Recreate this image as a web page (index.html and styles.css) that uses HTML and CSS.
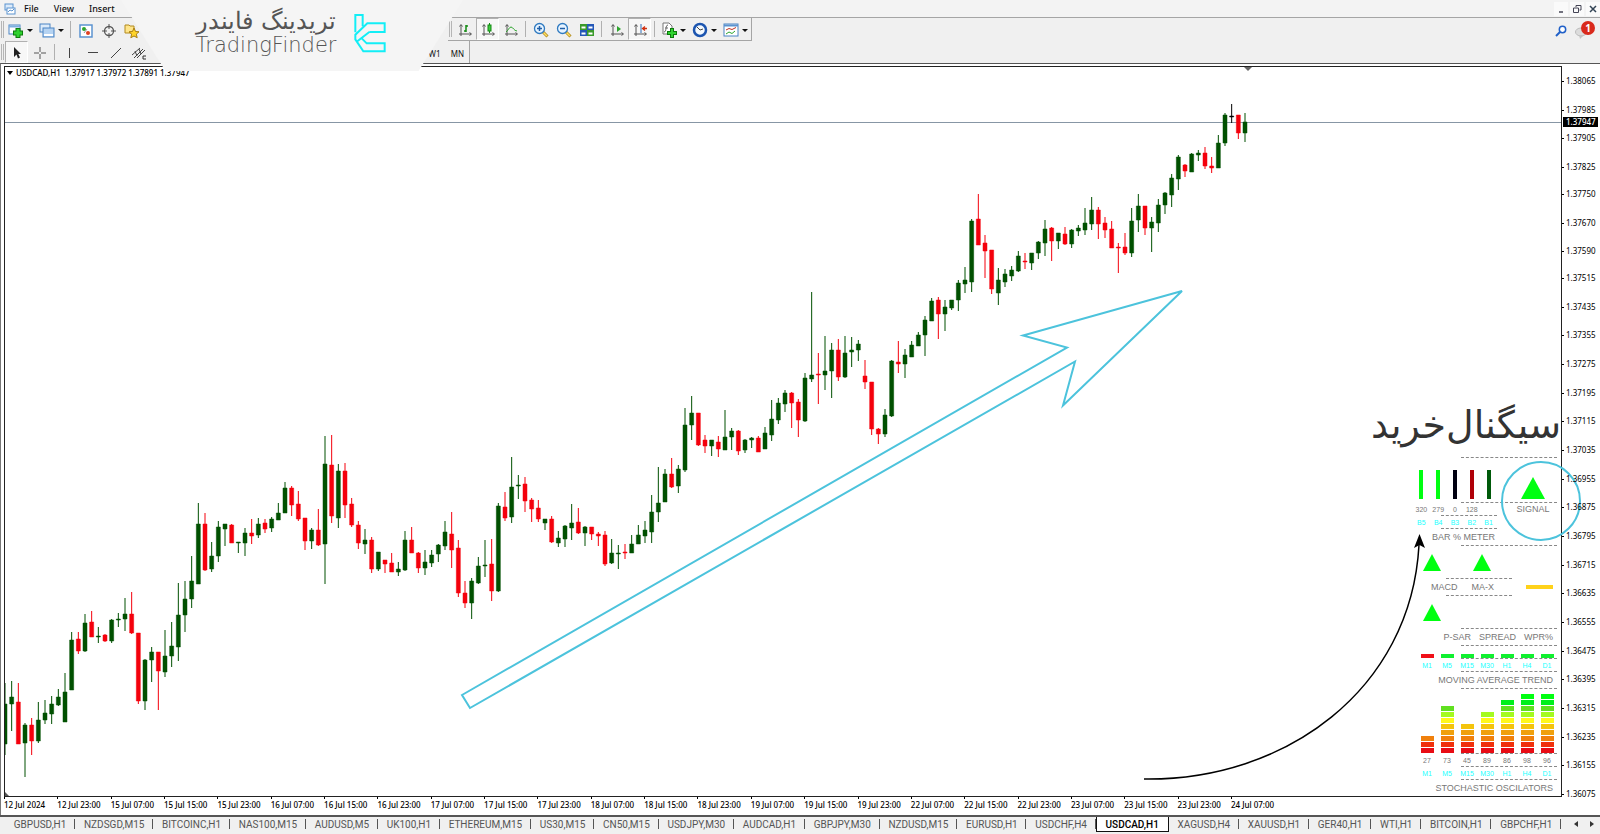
FILE: index.html
```html
<!doctype html>
<html lang="en">
<head>
    <meta charset="UTF-8">
    <meta name="viewport" content="width=device-width, initial-scale=1.0">
    <title>USDCAD,H1</title>
    <link rel="stylesheet" href="styles.css">
</head>
<body>
<div class="terminal">
    <header class="menu-bar">
        <svg class="menu-icon" width="12" height="12" viewBox="0 0 12 12">
            <rect x="1" y="1" width="8" height="6" fill="#dcebfa" stroke="#5b93cf"></rect>
            <rect x="3" y="5" width="8" height="6" fill="#fff" stroke="#5b93cf"></rect>
            <path d="M4 9l2-2 2 1 2-2" fill="none" stroke="#5b93cf"></path>
        </svg>
        <nav class="menu">
            <button type="button">File</button>
            <button type="button">View</button>
            <button type="button">Insert</button>
        </nav>
        <div class="window-controls">
            <button type="button" aria-label="Minimize"><svg width="10" height="10" viewBox="0 0 10 10"><path d="M3 8h4" stroke="#445" stroke-width="1.5"></path></svg></button>
            <button type="button" aria-label="Restore"><svg width="10" height="10" viewBox="0 0 10 10"><path d="M4 3V1.5h5V6H7.500M1.500 4h5v4.500h-5z" fill="none" stroke="#445"></path></svg></button>
            <button type="button" aria-label="Close"><svg width="10" height="10" viewBox="0 0 10 10"><path d="M2 2l6 6M8 2l-6 6" stroke="#345" stroke-width="1.500"></path></svg></button>
        </div>
    </header>

    <div class="toolbar">
        <span class="grip"></span>
        <button type="button" class="drop" aria-label="New chart">
            <svg width="16" height="16" viewBox="0 0 16 16"><rect x="1" y="2" width="11" height="9" fill="#fff" stroke="#4a84c4"></rect><path d="M1 3.500h11" stroke="#7db0e0" stroke-width="2"></path><path d="M10 5v10M5 10h10" stroke="#0b7a0b" stroke-width="5"></path><path d="M10 6v8M6 10h8" stroke="#2fd22f" stroke-width="3"></path></svg>
        </button>
        <button type="button" class="drop" aria-label="Profiles">
            <svg width="16" height="16" viewBox="0 0 16 16"><rect x="1" y="1" width="10" height="8" fill="#dcebfa" stroke="#4a84c4"></rect><rect x="4" y="5" width="11" height="9" fill="#b5d3f2" stroke="#4a84c4"></rect><path d="M5 12h9" stroke="#fff" stroke-width="2"></path></svg>
        </button>
        <span class="separator"></span>
        <button type="button" class="tool" aria-label="Market watch">
            <svg width="16" height="16" viewBox="0 0 16 16"><rect x="2" y="2" width="12" height="12" fill="#fff" stroke="#5b93cf" stroke-width="1.500"></rect><circle cx="6" cy="6" r="2" fill="#2ca52c"></circle><circle cx="10" cy="10" r="2" fill="#e04020"></circle><path d="M9 6l-3 4" stroke="#999"></path></svg>
        </button>
        <button type="button" class="tool" aria-label="Data window">
            <svg width="16" height="16" viewBox="0 0 16 16"><circle cx="8" cy="8" r="4.500" fill="none" stroke="#555" stroke-width="1.300"></circle><path d="M8 1v5M8 10v5M1 8h5M10 8h5" stroke="#555"></path></svg>
        </button>
        <button type="button" class="tool" aria-label="Navigator">
            <svg width="16" height="16" viewBox="0 0 16 16"><path d="M1 2h4l1 1h4v7H1z" fill="#ffe58a" stroke="#b28a1e"></path><path d="M10 5l1.500 3.500 3.500.3-2.700 2.300.9 3.600L10 13l-3.200 1.700.9-3.600L5 8.800l3.500-.3z" fill="#ffd42a" stroke="#a87d10"></path></svg>
        </button>

        <div class="tool-group charts-group">
            <span class="grip"></span>
            <button type="button" class="tool" aria-label="Bar chart">
                <svg width="16" height="16" viewBox="0 0 16 16"><path d="M4 3v11M2 12h12M2.500 4.500L4 2.500l1.500 2M12.500 10.500l2 1.500-2 1.500" fill="none" stroke="#555"></path><path d="M9 3v7M9 4h2M7 9h2" stroke="#128a12" stroke-width="1.500"></path></svg>
            </button>
            <button type="button" class="tool pressed" aria-label="Candlesticks">
                <svg width="16" height="16" viewBox="0 0 16 16"><path d="M4 3v11M2 12h12M2.500 4.500L4 2.500l1.500 2M12.500 10.500l2 1.500-2 1.500" fill="none" stroke="#555"></path><path d="M9.500 1v10" stroke="#128a12"></path><rect x="8" y="3" width="3" height="6" fill="#3ecb3e" stroke="#128a12"></rect></svg>
            </button>
            <button type="button" class="tool" aria-label="Line chart">
                <svg width="16" height="16" viewBox="0 0 16 16"><path d="M4 3v11M2 12h12M2.500 4.500L4 2.500l1.500 2M12.500 10.500l2 1.500-2 1.500" fill="none" stroke="#555"></path><path d="M3 10c2-1 3-5 5-5s3 4 6 4" fill="none" stroke="#2ca52c"></path></svg>
            </button>
            <span class="separator"></span>
            <button type="button" class="tool" aria-label="Zoom in">
                <svg width="16" height="16" viewBox="0 0 16 16"><path d="M10 10l4.500 4.500" stroke="#b08a20" stroke-width="3"></path><path d="M10.500 10.500l3.500 3.500" stroke="#ffdf60" stroke-width="1.500"></path><circle cx="6.500" cy="6.500" r="5" fill="#e6f3ff" stroke="#2f7ac0" stroke-width="1.300"></circle><path d="M4 6.500h5M6.500 4v5" stroke="#1f5fa8" stroke-width="1.500"></path></svg>
            </button>
            <button type="button" class="tool" aria-label="Zoom out">
                <svg width="16" height="16" viewBox="0 0 16 16"><path d="M10 10l4.500 4.500" stroke="#b08a20" stroke-width="3"></path><path d="M10.500 10.500l3.500 3.500" stroke="#ffdf60" stroke-width="1.500"></path><circle cx="6.500" cy="6.500" r="5" fill="#e6f3ff" stroke="#2f7ac0" stroke-width="1.300"></circle><path d="M4 6.500h5" stroke="#1f5fa8" stroke-width="1.500"></path></svg>
            </button>
            <button type="button" class="tool" aria-label="Tile windows">
                <svg width="16" height="16" viewBox="0 0 16 16"><path d="M1 2h7v6H1zM8 8h7v6H8z" fill="#3a9a2a"></path><path d="M8 2h7v6H8zM1 8h7v6H1z" fill="#2458b8"></path><path d="M2.500 4.500h4v2h-4zM9.500 4.500h4v2h-4zM2.500 10.500h4v2h-4zM9.500 10.500h4v2h-4z" fill="#fff"></path></svg>
            </button>
            <span class="separator"></span>
            <button type="button" class="tool" aria-label="Auto scroll">
                <svg width="16" height="16" viewBox="0 0 16 16"><path d="M4 3v11M2 12h12M2.500 4.500L4 2.500l1.500 2M12.500 10.500l2 1.500-2 1.500" fill="none" stroke="#555"></path><path d="M8 4l4 3-4 3z" fill="#2ca52c"></path></svg>
            </button>
            <button type="button" class="tool pressed" aria-label="Chart shift">
                <svg width="16" height="16" viewBox="0 0 16 16"><path d="M4 3v11M2 12h12M2.500 4.500L4 2.500l1.500 2M12.500 10.500l2 1.500-2 1.500" fill="none" stroke="#555"></path><path d="M9 2v9" stroke="#2f6fb8"></path><path d="M15 6.500h-4M13 4.500l-2.500 2 2.500 2" fill="none" stroke="#d03010" stroke-width="1.300"></path></svg>
            </button>
            <span class="separator"></span>
            <button type="button" class="drop" aria-label="Indicators">
                <svg width="16" height="16" viewBox="0 0 16 16"><path d="M2 1h6l3 3v8H2z" fill="#fff" stroke="#777"></path><path d="M7 3c-3 0-1 7-4 7M4 6h3" fill="none" stroke="#666"></path><path d="M11 6v10M6 11h10" stroke="#0b7a0b" stroke-width="4"></path><path d="M11 7v8M7 11h8" stroke="#2fd22f" stroke-width="2"></path></svg>
            </button>
            <button type="button" class="drop" aria-label="Periods">
                <svg width="16" height="16" viewBox="0 0 16 16"><circle cx="8" cy="8" r="6" fill="#f4faff" stroke="#1c55b0" stroke-width="2.500"></circle><path d="M5 5l3 3 3-1" fill="none" stroke="#444"></path></svg>
            </button>
            <button type="button" class="drop" aria-label="Templates">
                <svg width="16" height="16" viewBox="0 0 16 16"><rect x="1" y="2" width="14" height="12" fill="#fff" stroke="#4a84c4"></rect><path d="M1 3.500h14" stroke="#5b93cf" stroke-width="2"></path><path d="M3 8l3-1.500 3 1 4-2" fill="none" stroke="#c03020"></path><path d="M3 12l3-2 3 1.500 3-2.500" fill="none" stroke="#2ca52c"></path></svg>
            </button>
        </div>

        <div class="toolbar-end">
            <button type="button" class="tool" aria-label="Search">
                <svg width="12" height="12" viewBox="0 0 12 12"><circle cx="7.500" cy="4.500" r="3.200" fill="#fff" stroke="#2060c8" stroke-width="1.500"></circle><path d="M5 7l-4 4" stroke="#2060c8" stroke-width="2"></path></svg>
            </button>
            <button type="button" class="tool messages" aria-label="Messages">
                <svg width="16" height="16" viewBox="0 0 16 16"><ellipse cx="6" cy="9" rx="5.500" ry="4" fill="#dcdcdc" stroke="#bbb"></ellipse><path d="M4 12l1 4 4-4z" fill="#c4c4c4"></path></svg>
                <span class="badge">1</span>
            </button>
        </div>
    </div>

    <div class="toolbar">
        <span class="grip"></span>
        <button type="button" class="tool pressed" aria-label="Cursor">
            <svg width="16" height="16" viewBox="0 0 16 16"><path d="M5 2v10l2.500-2.500L9 13.500l2-1L9.300 9H12z" fill="#222"></path></svg>
        </button>
        <button type="button" class="tool" aria-label="Crosshair">
            <svg width="16" height="16" viewBox="0 0 16 16"><path d="M8 2v5M8 9v5M2 8h5M9 8h5" stroke="#555"></path></svg>
        </button>
        <span class="separator"></span>
        <button type="button" class="tool" aria-label="Vertical line">
            <svg width="16" height="16" viewBox="0 0 16 16"><path d="M7.500 3v10" stroke="#444"></path></svg>
        </button>
        <button type="button" class="tool" aria-label="Horizontal line">
            <svg width="16" height="16" viewBox="0 0 16 16"><path d="M3 7.500h10" stroke="#444"></path></svg>
        </button>
        <button type="button" class="tool" aria-label="Trendline">
            <svg width="16" height="16" viewBox="0 0 16 16"><path d="M3 13L13 3" stroke="#444"></path></svg>
        </button>
        <button type="button" class="tool" aria-label="Channel">
            <svg width="16" height="16" viewBox="0 0 16 16"><path d="M1 10l8-7M3 13l9-9M6 13l8-8M4 6l2 5M8 4l2 5" stroke="#444"></path><path d="M15 11h-3v3h3" fill="none" stroke="#333"></path></svg>
        </button>
        <div class="tool-group frames-group">
            <button type="button" class="tool">W1</button>
            <button type="button" class="tool">MN</button>
        </div>
    </div>

    <div class="brand">
        <div class="brand-name">
            <span class="brand-persian" lang="fa" dir="rtl">تریدینگ فایندر</span>
            <span>TradingFinder</span>
        </div>
        <svg width="36" height="42" viewBox="1066 36 108 124">
            <path d="M1076 96V44h22v34M1118 95h46V69h-52l-36 34v14l24 36h64v-24h-54l-14-14M1118 95l-36 28" fill="none" stroke="#12eef6" stroke-width="6"></path>
        </svg>
    </div>

    <main class="chart-window">
        <section class="pane">
            <svg class="chart" viewBox="5 67 1556 729" preserveAspectRatio="none">
                <path d="M5 122.500H1561" stroke="#8796a5"></path>
                <path d="M1244 67h8l-4 4z" fill="#666"></path>
                <path d="M5 792l4 4H5z" fill="#555"></path>
                <g id="candles"></g>
                <path class="trend-arrow" d="M462 695L1067 347.500 1023 335.500 1182 291 1063 405.500 1075 361.500 470 708z"></path>
                <path class="pointer" d="M1144 779C1285 781 1411 690 1419 545"></path>
                <path d="M1419.500 534l5.500 14-5.500-3-5.500 3z"></path>
            </svg>
            <h1 class="pane-title">USDCAD,H1&nbsp; 1.37917 1.37972 1.37891 1.37947</h1>

            <aside class="panel">
                <h2 lang="fa" dir="rtl">سیگنال‌خرید</h2>
                <hr>
                <div class="row meter-bars">
                    <ul class="meter">
                        <li class="bar lime"></li>
                        <li class="bar lime"></li>
                        <li class="bar black"></li>
                        <li class="bar dark-red"></li>
                        <li class="bar dark-green"></li>
                    </ul>
                    <div class="signal"><i class="up up-large"></i></div>
                </div>
                <hr>
                <div class="row small">
                    <ul class="meter values"><li>320</li><li>279</li><li>0</li><li>128</li><li></li></ul>
                    <div class="signal"><span>SIGNAL</span></div>
                </div>
                <hr class="mid">
                <div class="row small">
                    <ul class="meter names"><li>B5</li><li>B4</li><li>B3</li><li>B2</li><li>B1</li></ul>
                </div>
                <hr class="mid">
                <div class="row caption meter-caption">BAR % METER</div>
                <hr>
                <div class="row arrows"><i class="up"></i><i class="up"></i></div>
                <hr class="low">
                <div class="row pair"><span>MACD</span><span>MA-X</span><i class="neutral"></i></div>
                <hr class="low">
                <div class="row arrows"><i class="up"></i></div>
                <hr>
                <div class="row caption"><span>P-SAR</span><span>SPREAD</span><span>WPR%</span></div>
                <hr>
                <ul class="row small frames trend" id="trend"></ul>
                <hr>
                <ul class="row small frames names"><li>M1</li><li>M5</li><li>M15</li><li>M30</li><li>H1</li><li>H4</li><li>D1</li></ul>
                <hr>
                <div class="row caption">MOVING AVERAGE TREND</div>
                <hr>
                <ul class="row frames stacks" id="stacks"></ul>
                <hr>
                <ul class="row small frames values"><li>27</li><li>73</li><li>45</li><li>89</li><li>86</li><li>98</li><li>96</li></ul>
                <hr>
                <ul class="row small frames names"><li>M1</li><li>M5</li><li>M15</li><li>M30</li><li>H1</li><li>H4</li><li>D1</li></ul>
                <hr>
                <div class="row caption">STOCHASTIC OSCILATORS</div>
            </aside>
        </section>

        <div class="price-axis">
            <ol id="prices"></ol>
            <output class="price-now">1.37947</output>
        </div>
        <ol class="time-axis" id="times"></ol>
    </main>

    <footer class="tab-bar">
        <nav class="tabs" id="tabs"></nav>
        <div class="tab-scroll">
            <button type="button" aria-label="Previous tabs"><svg width="4" height="6" viewBox="0 0 4 6"><path d="M4 0v6L0 3z" fill="#333"></path></svg></button>
            <button type="button" aria-label="Next tabs"><svg width="4" height="6" viewBox="0 0 4 6"><path d="M0 0v6l4-3z" fill="#333"></path></svg></button>
        </div>
    </footer>
</div>
<script src="script.js"></script>
</body>
</html>
```
FILE: styles.css
```css
*, *:before, *:after {
    box-sizing: border-box;
}

body {
    margin: 0;
    font-family: "Noto Sans", "Open Sans", sans-serif;
    font-size: 9px;
    color: #111;
    background: #f0f0f0;
}

button {
    padding: 0;
    border: 0;
    background: none;
    font: inherit;
    color: inherit;
}

ul, ol {
    margin: 0;
    padding: 0;
    list-style: none;
}

.terminal {
    position: relative;
    display: flex;
    flex-direction: column;
    min-height: 100vh;
}

/* menu */
.menu-bar {
    display: flex;
    align-items: center;
    height: 18px;
    padding-left: 4px;
    border-bottom: 1px solid #a5a5a5;
    background: #f3f3f3;
}

.menu {
    display: flex;
    gap: 15px;
    margin-left: 8px;
    font-weight: 500;
}

.window-controls {
    display: flex;
    gap: 2px;
    margin-left: auto;
}

.window-controls button {
    display: flex;
    align-items: center;
    justify-content: center;
    width: 14px;
    height: 14px;
    background: #fafafa;
}

/* toolbars */
.toolbar {
    display: flex;
    align-items: stretch;
    height: 23px;
}

.toolbar + .toolbar {
    height: 22px;
}

.tool-group {
    display: flex;
    border-right: 1px solid #a5a5a5;
}

.charts-group {
    margin-left: 305px;
    border-bottom: 1px solid #a5a5a5;
}

.frames-group {
    margin-left: 273px;
    font-size: 8px;
}

.grip {
    width: 3px;
    margin: 3px 1px;
    border-left: 1px solid #b5b5b5;
    border-right: 1px solid #b5b5b5;
}

.separator {
    width: 1px;
    margin: 3px;
    background: #b0b0b0;
}

.tool, .drop {
    display: flex;
    align-items: center;
    justify-content: center;
    width: 23px;
    padding-top: 2px;
}

.drop {
    justify-content: flex-start;
    gap: 3px;
    width: 31px;
    padding-left: 3px;
}

.drop:after {
    content: '';
    border: 3px solid transparent;
    border-top-color: #111;
    border-bottom: 0;
}

.pressed {
    border: 1px solid #b0b0b0;
    border-right-color: #fff;
    border-bottom-color: #fff;
    background: #f7f7f7;
}

.toolbar-end {
    display: flex;
    margin-left: auto;
}

.messages {
    position: relative;
    width: 28px;
    padding-right: 6px;
}

.badge {
    position: absolute;
    top: 3px;
    right: 5px;
    width: 14px;
    border-radius: 50%;
    background: #d92a1c;
    color: #fff;
    font-size: 10px;
    font-weight: bold;
    line-height: 14px;
}

/* brand plate that lies over the toolbars */
.brand {
    position: absolute;
    z-index: 3;
    top: 0;
    left: 121px;
    display: flex;
    align-items: center;
    justify-content: center;
    gap: 16px;
    width: 342px;
    height: 71px;
    padding-bottom: 6px;
    background: #f5f5f5;
    clip-path: polygon(0 0, 100% 0, 87% 100%, 13% 100%);
}

.brand-name {
    display: flex;
    flex-direction: column;
    align-items: center;
    font-family: "DejaVu Sans", sans-serif;
    font-weight: 200;
    font-size: 21px;
    line-height: 24px;
    color: #555;
}

.brand-persian {
    font-size: 24px;
}

/* chart window */
.chart-window {
    display: grid;
    flex: 1;
    grid-template-columns: 1fr 38px;
    grid-template-rows: 1fr 18px;
    padding: 2px 0 0 3px;
    border-top: 1px solid #555;
    border-left: 1px solid #777;
    background: #fff;
    font-size: 8px;
    color: #000;
}

.pane {
    position: relative;
    min-height: 560px;
    border: 1px solid #222;
}

.chart {
    position: absolute;
    width: 100%;
    height: 100%;
}

.trend-arrow {
    fill: none;
    stroke: #4cc3dc;
    stroke-width: 2;
}

.pointer {
    fill: none;
    stroke: #000;
    stroke-width: 1.5;
}

.up-candle {
    fill: #005000;
    stroke: #005000;
}

.down-candle {
    fill: #f4000c;
    stroke: #f4000c;
}

.flat-candle {
    fill: #000;
    stroke: #000;
}

.pane-title {
    position: absolute;
    top: 0;
    left: 2px;
    display: flex;
    align-items: center;
    gap: 3px;
    margin: 0;
    font-size: 8px;
    font-weight: 500;
    line-height: 12px;
}

.pane-title:before {
    content: '';
    border: 3px solid transparent;
    border-top: 4px solid #000;
    border-bottom: 0;
}

.price-axis {
    position: relative;
    display: flex;
    padding: 15px 0 3px;
}

.price-axis ol {
    display: flex;
    flex-direction: column;
    flex: 1;
}

.price-axis li {
    display: flex;
    align-items: flex-start;
    min-height: 0;
}

.price-axis li span {
    margin-top: -6px;
    margin-left: 2px;
    line-height: 12px;
}

.price-axis li:before {
    content: '';
    width: 2px;
    height: 1px;
    background: #000;
}

.price-now {
    position: absolute;
    top: 7%;
    left: 1px;
    width: 35px;
    padding-left: 3px;
    background: #000;
    color: #fff;
    font-weight: 500;
    line-height: 10px;
}

.time-axis {
    display: flex;
    overflow: hidden;
    font-weight: 500;
}

.time-axis li {
    flex: 0 0 calc(100% / 29.2);
    white-space: nowrap;
    line-height: 12px;
}

.time-axis li:before {
    content: '';
    display: block;
    width: 1px;
    height: 2px;
    background: #000;
}

/* signal panel */
.panel {
    position: absolute;
    right: 4px;
    bottom: 0;
    display: flex;
    flex-direction: column;
    width: 144px;
    font-family: "Liberation Sans", sans-serif;
    font-size: 9px;
    color: #777;
}

.panel h2 {
    align-self: flex-end;
    margin: 0 -4px 8px 0;
    font-family: "DejaVu Sans", sans-serif;
    font-size: 38px;
    font-weight: normal;
    line-height: 48px;
    white-space: nowrap;
    color: #333;
}

.panel hr {
    width: 96px;
    margin: 0 0 0 auto;
    border: 0;
    border-top: 1px dashed #888;
}

.panel hr.mid {
    width: 56px;
    margin-right: 60px;
}

.panel hr.low {
    width: 66px;
    margin-right: 45px;
}

.row {
    display: flex;
    align-items: center;
    height: 16px;
}

.small {
    height: 12px;
}

.meter-bars {
    height: 44px;
    align-items: flex-end;
    padding-bottom: 3px;
}

.arrows {
    gap: 32px;
    height: 32px;
    padding-left: 10px;
}

.stacks {
    height: 64px;
}

.meter {
    display: grid;
    grid-template-columns: repeat(5, 1fr);
    justify-items: center;
    width: 84px;
}

.bar {
    width: 4px;
    height: 29px;
}

.lime { background: #0f1; }
.black { background: #001; }
.dark-red { background: #b00008; }
.dark-green { background: #005a0a; }

.signal {
    position: relative;
    display: flex;
    flex: 1;
    justify-content: center;
    padding-left: 12px;
}

/* ring round the signal cell */
.meter-bars .signal:after {
    content: '';
    position: absolute;
    top: -16px;
    left: 4px;
    width: 80px;
    height: 80px;
    border: 2px solid #4cc3dc;
    border-radius: 50%;
}

.up {
    border: 9px solid transparent;
    border-top: 0;
    border-bottom: 17px solid #0f1;
}

.up-large {
    border-width: 0 12px 22px;
}

.neutral {
    width: 27px;
    height: 4px;
    margin: 0 4px 0 auto;
    background: #ffd21a;
}

.values, .names {
    font-size: 7px;
}

.names {
    color: #2ff;
}

.caption {
    justify-content: flex-end;
    gap: 8px;
    padding-right: 4px;
    white-space: nowrap;
}

.meter-caption {
    padding-right: 62px;
}

.pair {
    gap: 14px;
    padding-left: 18px;
}

.frames {
    display: grid;
    grid-template-columns: repeat(7, 20px);
    justify-content: end;
    justify-items: center;
}

.frames.trend, .frames.stacks {
    align-items: end;
}

.trend li {
    width: 13px;
    height: 4px;
}

.stacks li {
    display: flex;
    flex-direction: column-reverse;
    gap: 1px;
}

.stacks i {
    width: 13px;
    height: 5px;
}

/* tabs */
.tab-bar {
    display: flex;
    height: 19px;
    border-top: 2px solid #555;
    padding-left: 5px;
    color: #555;
}

.tabs {
    display: flex;
    flex: 1;
    height: 15px;
    font-family: Roboto, sans-serif;
    font-size: 10px;
}

.tabs button {
    position: relative;
    flex: 1 1 auto;
    white-space: nowrap;
}

.tabs button:after {
    content: '';
    position: absolute;
    top: 2px;
    right: 0;
    width: 1px;
    height: 10px;
    background: #555;
}

.tabs button.active {
    border: 1px solid #111;
    border-top: 0;
    background: #fff;
    color: #000;
    font-weight: 500;
}

.tabs button.active:after {
    display: none;
}

.tab-scroll {
    display: flex;
    align-items: center;
    gap: 12px;
    width: 39px;
    height: 13px;
    padding-left: 13px;
}

.tab-scroll button {
    display: flex;
}
```
FILE: script.js
```js
// direction, high, body top, body bottom, low
const candles = `
u683,704,744,755 u681,697,704,731 d683,702,744,744 u723,725,743,777 d718,725,741,755 u702,720,741,743
u700,713,720,724 u696,704,714,724 u689,697,705,706 u673,692,722,722 u632,640,690,690 d632,639,651,654
u614,623,651,652 d611,622,637,637 u627,636,637,643 d634,635,641,642 u619,620,641,643 u613,619,620,627
u598,614,619,631 d592,614,633,634 d633,633,701,704 u659,660,701,710 u647,652,660,682 d652,652,671,710
u630,656,672,677 u622,646,656,667 u583,615,647,661 u581,599,615,632 u556,581,599,608 u503,524,584,584
d513,524,570,571 u542,556,569,572 u521,527,556,562 u524,524,529,546 d524,525,543,543 u542,542,543,553
u528,533,543,556 d519,533,536,544 u518,524,535,538 d519,523,529,533 u517,519,528,532 u503,513,520,520
u482,488,513,513 d486,488,505,516 d491,504,519,521 d518,518,541,550 u528,530,541,549 d509,530,545,546
u436,464,544,584 d435,465,516,523 u464,471,518,528 d463,471,505,518 d498,504,525,527 d521,525,543,549
u529,540,544,554 d537,540,569,573 u552,552,569,571 d560,560,564,573 d553,563,572,572 u562,569,572,576
u531,540,570,571 d527,540,553,553 d552,553,568,573 u550,562,568,575 u550,555,563,567 u544,545,554,562
u521,532,546,550 d512,534,550,568 d540,548,593,597 d581,593,603,608 u578,581,603,619 u557,566,583,584
u540,565,566,577 d539,564,591,601 u503,506,591,592 d492,507,518,521 u457,487,517,523 u475,485,486,499
d477,484,501,512 d498,500,509,522 d500,508,519,522 u519,519,523,530 d516,519,542,543 u531,538,543,547
u525,526,539,547 u504,523,528,540 d508,522,533,534 u526,527,533,546 d527,527,534,540 d532,534,536,546
d531,535,564,566 u539,553,563,564 u545,553,554,569 d544,552,553,559 u535,544,553,553 u525,535,544,544
u521,530,536,543 u495,512,532,543 u467,503,512,522 u469,474,502,502 d458,474,487,488 u465,469,486,493
u408,425,470,472 u396,413,425,440 d413,413,445,446 d435,440,446,453 u440,440,446,456 d436,442,449,457
u410,437,450,450 u428,431,437,450 d430,431,451,455 u439,440,450,453 u437,438,440,448 d436,438,452,452
u427,433,449,449 u400,419,435,441 u398,403,420,424 u390,393,404,412 d392,393,403,428 d399,402,420,437
u373,378,421,422 u292,375,379,382 d353,374,375,404 u336,371,375,390 u343,350,371,398 d339,350,377,381
u336,353,377,378 u337,350,352,367 u340,344,350,361 d360,376,382,389 d382,382,429,435 d428,429,434,444
u409,415,434,437 u360,361,416,417 d341,362,364,373 u349,355,364,378 u341,345,357,357 u332,335,346,346
u316,320,335,356 u298,301,321,321 d297,300,314,339 u300,307,314,331 u300,300,308,310 u280,283,300,311
u267,280,284,293 u219,221,282,292 d194,219,245,245 d235,243,251,278 d250,250,289,294 u268,280,293,305
u269,274,282,287 u266,270,276,281 u251,256,271,272 d253,261,262,269 u253,253,263,270 u241,242,253,259
u220,229,243,256 d227,228,241,261 u233,233,241,249 d227,234,244,245 u229,230,244,248 u225,228,231,236
u208,223,230,235 u197,210,224,230 d207,210,224,239 d217,223,230,238 d221,229,248,248 d243,247,248,273
d233,247,253,255 u208,221,253,257 u194,206,220,232 d206,206,228,235 u217,222,228,252 u199,205,223,232
u192,193,205,214 u174,178,195,207 u155,157,179,190 d164,165,171,177 u153,154,172,172 u150,153,155,161
d147,153,166,169 d157,166,168,173 u135,143,168,168 u113,115,143,146 f104,116,117,123 d115,115,133,139
u113,122,133,142`.trim().split(/\s+/);

const kinds = { u: 'up-candle', d: 'down-candle', f: 'flat-candle' };
const step = 20 / 3;

document.getElementById('candles').innerHTML = candles.map((item, i) => {
    const [high, top, bottom, low] = item.slice(1).split(',').map(Number);
    const x = 5 + i * step;
    return `<g class="${kinds[item[0]]}">
        <path d="M${x} ${high}V${low}"></path>
        <path d="M${x - 2} ${top}h4V${Math.max(bottom, top + 1)}h-4z" stroke-width=".5"></path>
    </g>`;
}).join('');

// price scale, each gap grows with the price distance
const prices = [
    38065, 37985, 37905, 37825, 37750, 37670, 37590, 37515, 37435, 37355, 37275, 37195, 37115,
    37035, 36955, 36875, 36795, 36715, 36635, 36555, 36475, 36395, 36315, 36235, 36155, 36075
];
document.getElementById('prices').innerHTML = prices.map((price, i) => {
    const gap = i < prices.length - 1 ? price - prices[i + 1] : 0;
    return `<li style="flex: ${gap} 0 0px"><span>1.${price}</span></li>`;
}).join('');

// one label every eight hours
const times = ['12 Jul 2024', '12 Jul 23:00'];
[15, 16, 17, 18, 19, 22, 23].forEach(day => {
    ['07:00', '15:00', '23:00'].forEach(hour => times.push(`${day} Jul ${hour}`));
});
times.push('24 Jul 07:00');
document.getElementById('times').innerHTML = times.map(time => `<li>${time}</li>`).join('');

const tabs = [
    'GBPUSD,H1', 'NZDSGD,M15', 'BITCOINC,H1', 'NAS100,M15', 'AUDUSD,M5', 'UK100,H1', 'ETHEREUM,M15',
    'US30,M15', 'CN50,M15', 'USDJPY,M30', 'AUDCAD,H1', 'GBPJPY,M30', 'NZDUSD,M15', 'EURUSD,H1',
    'USDCHF,H4', 'USDCAD,H1', 'XAGUSD,H4', 'XAUUSD,H1', 'GER40,H1', 'WTI,H1', 'BITCOIN,H1', 'GBPCHF,H1'
];
document.getElementById('tabs').innerHTML = tabs.map(tab =>
    `<button type="button"${tab === 'USDCAD,H1' ? ' class="active"' : ''}>${tab}</button>`
).join('');

// signal panel
document.getElementById('trend').innerHTML = ['#f01018', ...Array(6).fill('#10f030')]
    .map(color => `<li style="background: ${color}"></li>`).join('');

const levels = ['#e80c14', '#f0300c', '#f0800c', '#f0a00c', '#f4c40c', '#fff81a', '#a4fa20', '#60e020', '#00f01c', '#0f1'];
document.getElementById('stacks').innerHTML = [3, 8, 5, 7, 9, 10, 10].map(count =>
    `<li>${levels.slice(0, count).map(color => `<i style="background: ${color}"></i>`).join('')}</li>`
).join('');
```
